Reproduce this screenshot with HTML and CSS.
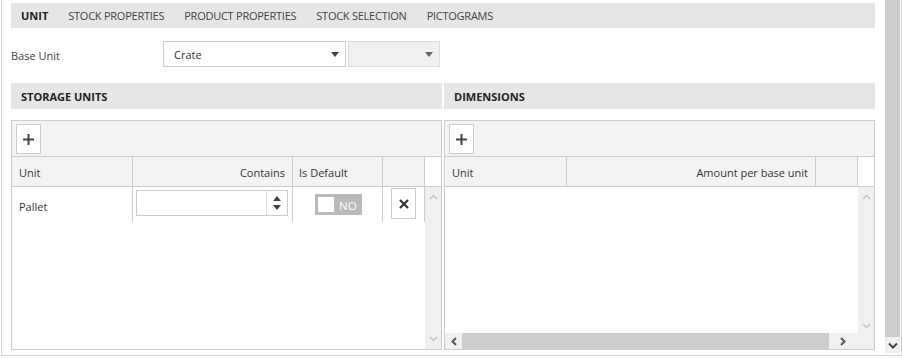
FILE: index.html
```html
<!DOCTYPE html>
<html lang="en">
<head>
    <meta charset="UTF-8">
    <title>Article units</title>
    <link rel="stylesheet" href="styles.css">
</head>
<body>
    <div class="frame">
        <div class="content">
            <div class="tabs">
                <span class="tab active">UNIT</span>
                <span class="tab">STOCK PROPERTIES</span>
                <span class="tab">PRODUCT PROPERTIES</span>
                <span class="tab">STOCK SELECTION</span>
                <span class="tab">PICTOGRAMS</span>
            </div>

            <div class="field-row">
                <label class="field-label">Base Unit</label>
                <div class="select">
                    <span>Crate</span>
                    <svg class="caret" width="8" height="5" viewBox="0 0 8 5"><path d="M0 0h8L4 5z" fill="#444"/></svg>
                </div>
                <div class="select select-disabled">
                    <span></span>
                    <svg class="caret" width="8" height="5" viewBox="0 0 8 5"><path d="M0 0h8L4 5z" fill="#666"/></svg>
                </div>
            </div>

            <div class="sections">
                <div class="section-head">STORAGE UNITS</div>
                <div class="section-head">DIMENSIONS</div>
            </div>

            <div class="panels">
                <!-- storage units grid -->
                <div class="grid">
                    <div class="grid-toolbar">
                        <button class="icon-btn add-btn">
                            <svg width="11" height="11" viewBox="0 0 11 11"><path d="M5.5 0v11M0 5.5h11" stroke="#444" stroke-width="2"/></svg>
                        </button>
                    </div>
                    <div class="grid-head">
                        <div class="cell c-unit">Unit</div>
                        <div class="cell c-contains right">Contains</div>
                        <div class="cell c-default">Is Default</div>
                        <div class="cell c-action"></div>
                        <div class="cell c-scroll"></div>
                    </div>
                    <div class="grid-body">
                        <div class="rows">
                            <div class="row">
                                <div class="cell c-unit">Pallet</div>
                                <div class="cell c-contains">
                                    <div class="spin-input">
                                        <span class="spin-value"></span>
                                        <span class="spin-arrows">
                                            <svg width="8" height="16" viewBox="0 0 8 16"><path d="M0 6h8L4 1z M0 10h8L4 15z" fill="#444"/></svg>
                                        </span>
                                    </div>
                                </div>
                                <div class="cell c-default">
                                    <div class="toggle"><span class="knob"></span><span class="toggle-text">NO</span></div>
                                </div>
                                <div class="cell c-action">
                                    <button class="icon-btn del-btn">
                                        <svg width="10" height="10" viewBox="0 0 10 10"><path d="M1 1l8 8M9 1l-8 8" stroke="#333" stroke-width="2.2"/></svg>
                                    </button>
                                </div>
                            </div>
                        </div>
                        <div class="vscroll">
                            <svg width="9" height="6" viewBox="0 0 9 6"><path d="M1 5l3.5-3.5L8 5" fill="none" stroke="#c4c4c4" stroke-width="1.5"/></svg>
                            <svg width="9" height="6" viewBox="0 0 9 6"><path d="M1 1l3.5 3.5L8 1" fill="none" stroke="#c4c4c4" stroke-width="1.5"/></svg>
                        </div>
                    </div>
                </div>

                <!-- dimensions grid -->
                <div class="grid">
                    <div class="grid-toolbar">
                        <button class="icon-btn add-btn">
                            <svg width="11" height="11" viewBox="0 0 11 11"><path d="M5.5 0v11M0 5.5h11" stroke="#444" stroke-width="2"/></svg>
                        </button>
                    </div>
                    <div class="grid-head">
                        <div class="cell d-unit">Unit</div>
                        <div class="cell d-amount right">Amount per base unit</div>
                        <div class="cell c-action"></div>
                        <div class="cell c-scroll"></div>
                    </div>
                    <div class="grid-body with-hscroll">
                        <div class="body-main">
                            <div class="rows"></div>
                            <div class="vscroll">
                                <svg width="9" height="6" viewBox="0 0 9 6"><path d="M1 5l3.5-3.5L8 5" fill="none" stroke="#c4c4c4" stroke-width="1.5"/></svg>
                                <svg width="9" height="6" viewBox="0 0 9 6"><path d="M1 1l3.5 3.5L8 1" fill="none" stroke="#c4c4c4" stroke-width="1.5"/></svg>
                            </div>
                        </div>
                        <div class="hscroll">
                            <span class="h-arrow">
                                <svg width="6" height="9" viewBox="0 0 6 9"><path d="M5 1L1.5 4.5 5 8" fill="none" stroke="#555" stroke-width="2"/></svg>
                            </span>
                            <span class="h-thumb"></span>
                            <span class="h-arrow">
                                <svg width="6" height="9" viewBox="0 0 6 9"><path d="M1 1l3.5 3.5L1 8" fill="none" stroke="#555" stroke-width="2"/></svg>
                            </span>
                            <span class="h-corner"></span>
                        </div>
                    </div>
                </div>
            </div>
        </div>

        <div class="page-scroll">
            <div class="page-thumb"></div>
            <div class="page-arrow">
                <svg width="10" height="7" viewBox="0 0 10 7"><path d="M1 1.5l4 4 4-4" fill="none" stroke="#444" stroke-width="2"/></svg>
            </div>
        </div>
    </div>
</body>
</html>
```

FILE: styles.css
```css
body {
    margin: 0;
    font-family: "Open Sans", "Noto Sans", sans-serif;
    font-size: 11px;
    color: #333333;
    background-color: #ffffff;
}
.frame {
    display: flex;
    width: 901px;
    height: 356px;
    margin-left: 1px;
    border: 1px solid #d4d4d4;
    border-top: none;
    box-sizing: border-box;
}
.content {
    flex: 1;
    padding: 3px 10px 0 9px;
}

/* tabs */
.tabs {
    display: flex;
    height: 25px;
    align-items: center;
    background-color: #e6e6e6;
}
.tab {
    padding: 0 10px;
    color: #444444;
    letter-spacing: -0.25px;
}
.tab.active {
    font-weight: bold;
    color: #222222;
    letter-spacing: 0;
}

/* base unit row */
.field-row {
    display: flex;
    align-items: center;
    margin-top: 13px;
    height: 26px;
}
.field-label {
    width: 152px;
    padding-top: 2px;
    font-size: 11px;
    color: #444444;
}
.select {
    display: flex;
    align-items: center;
    justify-content: space-between;
    width: 183px;
    height: 26px;
    padding: 0 6px 0 10px;
    border: 1px solid #cccccc;
    box-sizing: border-box;
    background-color: #ffffff;
    color: #333333;
}
.select-disabled {
    width: 92px;
    margin-left: 2px;
    background-color: #f0f0f0;
    border-color: #dddddd;
}

/* section headers */
.sections {
    display: flex;
    gap: 2px;
    margin-top: 16px;
}
.section-head {
    flex: 1;
    height: 26px;
    line-height: 28px;
    padding-left: 10px;
    box-sizing: border-box;
    background-color: #e6e6e6;
    font-weight: bold;
    color: #222222;
}

/* grids */
.panels {
    display: flex;
    gap: 2px;
    margin-top: 11px;
}
.grid {
    flex: 1;
    display: flex;
    flex-direction: column;
    height: 230px;
    border: 1px solid #cccccc;
    box-sizing: border-box;
}
.grid-toolbar {
    height: 36px;
    padding: 3px 0 0 4px;
    box-sizing: border-box;
    background-color: #f3f3f3;
    border-bottom: 1px solid #cccccc;
}
.icon-btn {
    display: flex;
    align-items: center;
    justify-content: center;
    padding: 0;
    background-color: #ffffff;
    border: 1px solid #cccccc;
    box-sizing: border-box;
}
.add-btn {
    width: 25px;
    height: 30px;
}
.grid-head {
    display: flex;
    height: 29px;
    background-color: #f3f3f3;
    border-bottom: 1px solid #cccccc;
}
.cell {
    display: flex;
    align-items: center;
    padding: 2px 7px 0;
    box-sizing: border-box;
    border-right: 1px solid #cccccc;
}
.cell.right {
    justify-content: flex-end;
}
.c-unit { width: 121px; }
.c-contains { width: 160px; }
.c-default { width: 90px; padding-left: 6px; }
.c-action { width: 42px; }
.c-scroll {
    flex: 1;
    border-right: none;
    background-color: #ffffff;
}
.d-unit { width: 122px; }
.d-amount { width: 249px; }

.grid-body {
    flex: 1;
    display: flex;
    min-height: 0;
}
.rows {
    flex: 1;
}
.row {
    display: flex;
    height: 35px;
}
.row .c-unit {
    padding-top: 4px;
}
.row .c-contains {
    padding: 0 4px 3px 3px;
}
.row .c-default {
    padding: 0 0 0 22px;
}
.row .c-action {
    justify-content: center;
    padding: 0 0 2px;
}
.vscroll {
    display: flex;
    flex-direction: column;
    justify-content: space-between;
    align-items: center;
    width: 16px;
    padding: 7px 0 7px;
    box-sizing: border-box;
    background-color: #f0f0f0;
}

/* spinner input */
.spin-input {
    display: flex;
    width: 152px;
    height: 26px;
    border: 1px solid #cccccc;
    box-sizing: border-box;
    background-color: #ffffff;
}
.spin-value {
    flex: 1;
    border-right: 1px solid #dddddd;
}
.spin-arrows {
    display: flex;
    align-items: center;
    justify-content: center;
    width: 20px;
}

/* toggle */
.toggle {
    display: flex;
    align-items: center;
    width: 47px;
    height: 21px;
    padding: 0 3px;
    box-sizing: border-box;
    background-color: #bababa;
}
.knob {
    width: 16px;
    height: 15px;
    background-color: #ffffff;
}
.toggle-text {
    margin: 1px 0 0 5px;
    font-size: 11.5px;
    color: #ffffff;
}
.del-btn {
    width: 25px;
    height: 31px;
}

/* dimensions body with horizontal bar */
.with-hscroll {
    flex-direction: column;
}
.body-main {
    flex: 1;
    display: flex;
}
.body-main .vscroll {
    padding-bottom: 4px;
}
.hscroll {
    display: flex;
    align-items: center;
    height: 16px;
    background-color: #f0f0f0;
}
.h-arrow {
    display: flex;
    align-items: center;
    justify-content: center;
    width: 17px;
}
.h-thumb {
    width: 367px;
    height: 16px;
    background-color: #cdcdcd;
}
.h-arrow + .h-thumb + .h-arrow {
    width: 28px;
}
.h-corner {
    flex: 1;
}

/* page scrollbar */
.page-scroll {
    display: flex;
    flex-direction: column;
    width: 15px;
    margin-right: 1px;
    height: 353px;
}
.page-thumb {
    flex: 1;
    background-color: #cdcdcd;
}
.page-arrow {
    display: flex;
    align-items: center;
    justify-content: center;
    height: 16px;
    background-color: #f0f0f0;
}
```
